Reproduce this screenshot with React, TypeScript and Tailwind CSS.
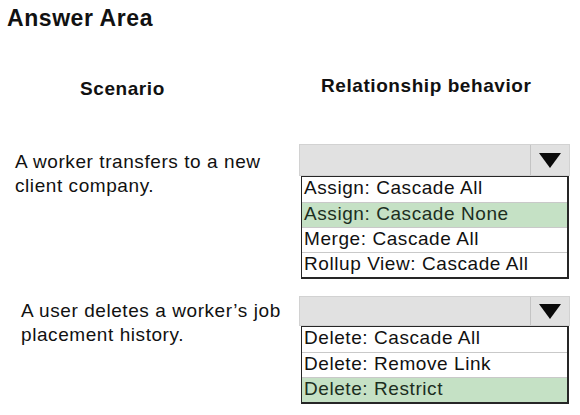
const ArrowDown = () => (
  <svg width="22" height="15" viewBox="0 0 22 15">
    <polygon points="0,0 22,0 11,15" fill="#0a0a0a" />
  </svg>
)

type Option = { label: string; picked?: boolean }

const Dropdown = ({ options, headClass }: { options: Option[]; headClass: string }) => {
  return (
    <div className="w-[271px]">
      <div className={`flex border border-[#d2d2d2] bg-[#e1e1e1] ${headClass}`}>
        <div className="flex-1" />
        <div className="flex w-[39px] items-center justify-center border-l border-[#c4c4c4]">
          <ArrowDown />
        </div>
      </div>
      <div className="ml-[2px] w-[268px] border border-r-2 border-b-2 border-[#262626]">
        {options.map((o, i) => (
          <div
            key={o.label}
            className={`h-[25px] pl-[2px] leading-[21px] ${i > 0 ? "border-t border-[#c9c9c9]" : ""} ${
              o.picked ? "bg-[#c5e1c5] text-[#1c2e1e]" : "bg-white"
            }`}
          >
            {o.label}
          </div>
        ))}
      </div>
    </div>
  )
}

export default function App() {
  return (
    <div className="h-[415px] w-[580px] overflow-hidden bg-white font-['Liberation_Sans',Arial,sans-serif] tracking-[0.03em] text-[19px] text-[#111]">
      <h1 className="pl-[7px] pt-[4px] text-[23px] font-bold leading-[28px]">Answer Area</h1>

      <div className="mt-[42px] flex h-[70px] font-bold leading-[24px]">
        <div className="w-[299px] pl-[80px] pt-[3px]">Scenario</div>
        <div className="pl-[22px]">Relationship behavior</div>
      </div>

      <div className="flex">
        <div className="w-[299px] pl-[15px] pt-[6px] leading-[24px]">
          A worker transfers to a new
          <br />
          client company.
        </div>
        <Dropdown
          headClass="h-[32px]"
          options={[
            { label: "Assign: Cascade All" },
            { label: "Assign: Cascade None", picked: true },
            { label: "Merge: Cascade All" },
            { label: "Rollup View: Cascade All" },
          ]}
        />
      </div>

      <div className="mt-[17px] flex">
        <div className="w-[299px] pl-[21px] pt-[3px] leading-[24px]">
          A user deletes a worker’s job
          <br />
          placement history.
        </div>
        <Dropdown
          headClass="h-[30px]"
          options={[
            { label: "Delete: Cascade All" },
            { label: "Delete: Remove Link" },
            { label: "Delete: Restrict", picked: true },
          ]}
        />
      </div>
    </div>
  )
}
